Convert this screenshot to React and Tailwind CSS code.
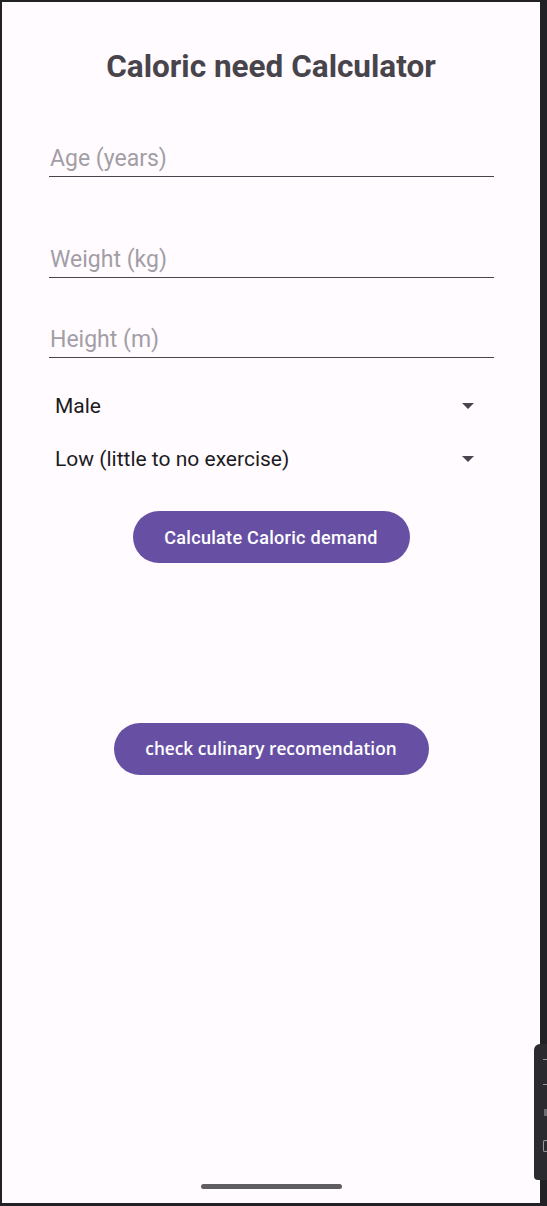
import React from "react";

function Field({ label, className = "" }) {
  return (
    <div className={"border-b border-[#49454f] pb-[4px] " + className}>
      <div className="text-[23px] leading-[27px] text-[#a29ea6] pl-[1px]">{label}</div>
    </div>
  );
}

function Spinner({ label, className = "" }) {
  return (
    <div className={"flex items-center justify-between pl-[6px] pr-[20px] " + className}>
      <span className="text-[21px] leading-[26px] text-[#1c1b1f]">{label}</span>
      <svg width="12" height="6" viewBox="0 0 12 6" className="block">
        <path d="M0 0 L12 0 L6 6 Z" fill="#49454f" />
      </svg>
    </div>
  );
}

export default function App() {
  return (
    <div
      className="w-[547px] h-[1206px] bg-[#222226] pl-[2px] pt-[2px] pr-[7px] pb-[3px] relative"
      style={{ fontFamily: "Roboto, 'Noto Sans', sans-serif" }}
    >
      <div className="w-full h-full bg-[#fffbfe] flex flex-col relative">
        <h1 className="mt-[46px] text-center text-[31.5px] leading-[38px] font-bold text-[#48444c]">
          Caloric need Calculator
        </h1>
        <div className="pl-[47px] pr-[46px] flex flex-col">
          <Field label="Age (years)" className="mt-[59px]" />
          <Field label="Weight (kg)" className="mt-[69px]" />
          <Field label="Height (m)" className="mt-[48px]" />
        </div>
        <div className="pl-[47px] pr-[46px] flex flex-col">
          <Spinner label="Male" className="mt-[35px]" />
          <Spinner label="Low (little to no exercise)" className="mt-[27px]" />
        </div>
        <div className="flex justify-center mt-[39px]">
          <button className="w-[277px] h-[52px] rounded-full bg-[#6750a4] text-white text-[18px] font-medium tracking-[0.3px]">
            Calculate Caloric demand
          </button>
        </div>
        <div className="flex justify-center mt-[160px]">
          <button
            className="w-[315px] h-[52px] rounded-full bg-[#6750a4] text-white text-[17.25px] font-semibold"
            style={{ fontFamily: "'Open Sans', sans-serif" }}
          >
            check culinary recomendation
          </button>
        </div>
        <div className="flex-1" />
        <div className="flex justify-center mb-[14px]">
          <div className="w-[141px] h-[5px] rounded-full bg-[#605d62]" />
        </div>
      </div>
      <div className="absolute right-0 top-[1044px] w-[13px] h-[136px] bg-[#2b2b2f] rounded-tl-[6px] rounded-bl-[4px] flex flex-col items-end pt-[15px] gap-[24px]">
        <div className="w-[4px] h-[1px] bg-[#9a9a9e]" />
        <div className="w-[4px] h-[1px] bg-[#9a9a9e]" />
        <div className="w-[3px] h-[7px] bg-[#9a9a9e] opacity-60" />
        <div className="w-[4px] h-[12px] border border-[#9a9a9e] rounded-l-[2px] border-r-0" />
      </div>
    </div>
  );
}
